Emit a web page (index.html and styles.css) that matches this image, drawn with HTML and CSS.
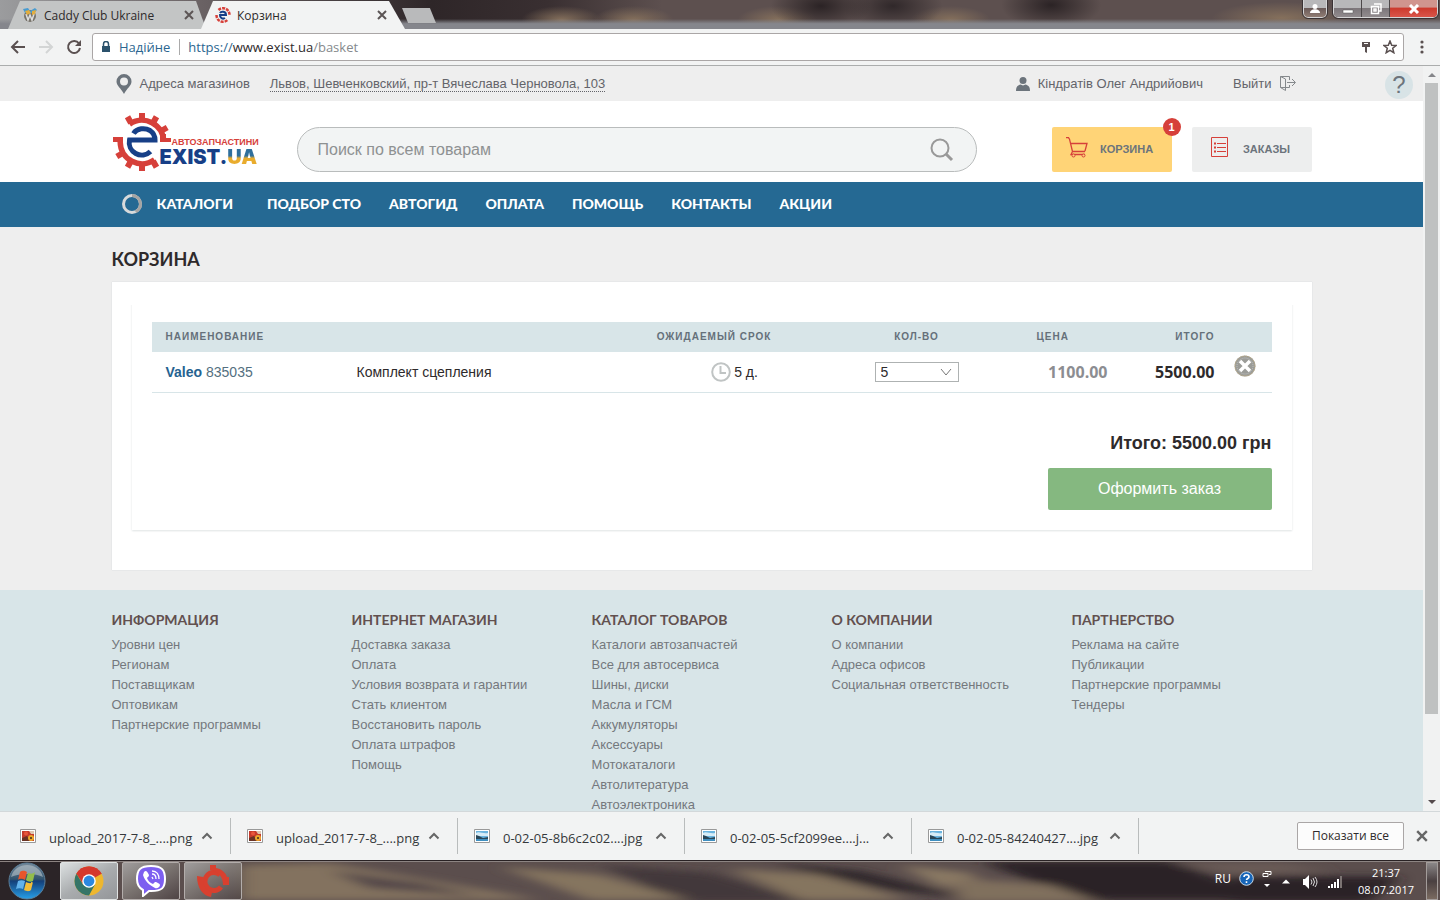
FILE: index.html
```html
<!DOCTYPE html>
<html lang="ru">
<head>
<meta charset="utf-8">
<title>Корзина</title>
<link rel="stylesheet" href="styles.css">
</head>
<body>
<svg class="defs" width="0" height="0" aria-hidden="true">
  <defs>
    <symbol id="x" viewBox="0 0 10 10"><path d="M1 1l8 8M9 1l-8 8" fill="none" stroke="currentColor" stroke-width="2"/></symbol>
    <symbol id="up" viewBox="0 0 12 8"><path d="M1.500 6.500L6 2l4.500 4.500" fill="none" stroke="currentColor" stroke-width="2"/></symbol>
    <symbol id="gear" viewBox="-30 -30 60 60">
      <g fill="none" stroke="#d6403a">
        <path d="M-12.500 -17.800A21.800 21.800 0 0 1 21.800 0M-21.800 0A21.800 21.800 0 0 0 12.500 17.800" stroke-width="5.500"/>
        <path d="M-11 -19L-14.500 -25.200M0 -22V-29M11 -19L14.500 -25.200M19 -11L25.200 -14.500M-19 11L-25.200 14.500M-11 19L-14.500 25.200M0 22V29M11 19L14.500 25.200" stroke-width="6"/>
      </g>
      <path d="M18 -8h6l0 4h5V0H18zM-29 -5h10V0h-10z" fill="#d6403a"/>
      <path d="M-8.500 -8.500C-5 -14 3 -14.500 8 -11.500C11 -9.500 13 -6 13 -2H-12.500A12.500 12.500 0 0 0 8.500 9.500" fill="none" stroke="#173f87" stroke-width="5"/>
    </symbol>
    <symbol id="pic-a" viewBox="0 0 16 14"><path d="M.5.500h15v13H.5z" fill="#fff" stroke="#999"/><path d="M2 2h12v10H2z" fill="#c63a2b"/><path d="M2 9l5-2 3 5H2z" fill="#6a3325"/><circle cx="11" cy="9" r="3" fill="#eba92d"/><circle cx="6" cy="4.500" r="2" fill="#e8573c"/><circle cx="11" cy="9" r="1" fill="#3b2a23"/><path d="M9 2h5v3h-3z" fill="#dfc7b2"/></symbol>
    <symbol id="pic-b" viewBox="0 0 16 14"><path d="M.5.500h15v13H.5z" fill="#fff" stroke="#999"/><path d="M2 2h12v10H2z" fill="#6bb4df"/><path d="M2 4c3-2 7 1 12 0v3H2z" fill="#d6ecf7"/><path d="M2 6l3 1 4 2 5-1v2H2z" fill="#2a4657"/><path d="M2 10h12v2H2z" fill="#3f8fc0"/></symbol>
    <linearGradient id="orb" x1="0" y1="0" x2="0" y2="1"><stop offset="0" stop-color="#75899a"/><stop offset=".45" stop-color="#31536e"/><stop offset=".5" stop-color="#143f79"/><stop offset="1" stop-color="#27a0e8"/></linearGradient>
    <filter id="soft" x="-20%" y="-50%" width="140%" height="200%"><feGaussianBlur stdDeviation="9 4"/></filter>
  </defs>
</svg>

<div class="desktop">
  <header class="titlebar">
    <div class="tabs" role="tablist">
      <div class="tab"><span class="tab-shape"></span>
        <svg class="tab-icon" viewBox="0 0 16 16"><circle cx="8" cy="9" r="6" fill="#77736b"/><path d="M4 7l2 6 2-5 2 5 2-6" fill="none" stroke="#dedede" stroke-width="1.500"/><path d="M1 2l5-1 2 3 5-3 2 2-3 3H3z" fill="#479bd1"/><path d="M3 4l4-1 2 3-4 2zM10 4l4-1-1 4-3 1z" fill="#e3ad3e"/></svg>
        <span class="tab-name">Caddy Club Ukraine</span>
        <button class="plain tab-close" aria-label="Закрити вкладку"><svg width="10" height="10"><use href="#x"/></svg></button>
      </div>
      <div class="tab active"><span class="tab-shape"></span>
        <svg class="tab-icon" viewBox="0 0 16 16"><path d="M3.500 3A6.500 6.500 0 0 1 14.500 8M1.500 8A6.500 6.500 0 0 0 12.500 13" fill="none" stroke="#d6403a" stroke-width="2.500" stroke-dasharray="3 1"/><path d="M5 6C6 4 11 4 11 8H5a3.200 3.200 0 0 0 5 3" fill="none" stroke="#173f87" stroke-width="2"/></svg>
        <span class="tab-name">Корзина</span>
        <button class="plain tab-close" aria-label="Закрити вкладку"><svg width="10" height="10"><use href="#x"/></svg></button>
      </div>
      <button class="plain new-tab" aria-label="Нова вкладка"></button>
    </div>
    <div class="window-controls">
      <button class="wc profile" aria-label="Користувач"><svg width="12" height="12" viewBox="0 0 12 12"><circle cx="6" cy="3.500" r="2.500" fill="#fff"/><path d="M1 10c0-5 10-5 10 0z" fill="#fff"/></svg></button>
      <div class="wc-group">
        <button class="wc" aria-label="Згорнути"><svg width="12" height="12" viewBox="0 0 12 12"><path d="M1 7h10v3H1z" fill="#fff" stroke="#555" stroke-width=".5"/></svg></button>
        <button class="wc" aria-label="Відновити"><svg width="12" height="12" viewBox="0 0 12 12"><path d="M4 1h7v7H9M1.500 3.500h7v7h-7zM4 6h2v2H4z" fill="none" stroke="#fff" stroke-width="1.500"/></svg></button>
        <button class="wc close" aria-label="Закрити"><svg width="12" height="10" viewBox="0 0 12 10"><path d="M2 1l8 8M10 1L2 9" stroke="#fff" stroke-width="3"/></svg></button>
      </div>
    </div>
  </header>

  <div class="toolbar">
    <button class="plain" aria-label="Назад"><svg width="16" height="16" viewBox="0 0 16 16"><path d="M15 8H2M8 2L2 8l6 6" fill="none" stroke="#5a5050" stroke-width="2"/></svg></button>
    <button class="plain" aria-label="Вперед"><svg width="16" height="16" viewBox="0 0 16 16"><path d="M1 8h13M8 2l6 6-6 6" fill="none" stroke="#d3d5d5" stroke-width="2"/></svg></button>
    <button class="plain" aria-label="Оновити"><svg width="16" height="16" viewBox="0 0 16 16"><path d="M13 4.500A6 6 0 1 0 14 9" fill="none" stroke="#5a5050" stroke-width="2"/><path d="M15 1v6H9z" fill="#5a5050"/></svg></button>
    <div class="address">
      <svg width="10" height="12" viewBox="0 0 10 12"><path d="M1 5h8v6H1z" fill="#2b526c"/><path d="M2.500 5V3a2.500 2.500 0 0 1 5 0v2" fill="none" stroke="#2b526c" stroke-width="1.500"/></svg>
      <span class="secure">Надійне</span>
      <span class="url"><span class="scheme">https://</span>www.exist.ua<span class="path">/basket</span></span>
      <svg width="10" height="13" viewBox="0 0 10 13"><path d="M1 1h8v5H6v6L4 11V6H1z" fill="#5a5050"/><path d="M3 2h4v1H3z" fill="#fff"/></svg>
      <svg width="14" height="14" viewBox="0 0 14 14"><path d="M7 1l1.700 4.200 4.300.3-3.300 2.800 1.100 4.400L7 10.300l-3.800 2.400 1.100-4.400L1 5.500l4.300-.3z" fill="none" stroke="#5a5050" stroke-width="1.500"/></svg>
    </div>
    <button class="plain menu" aria-label="Меню"><svg width="4" height="14" viewBox="0 0 4 14"><circle cx="2" cy="2" r="1.600" fill="#5a5050"/><circle cx="2" cy="7" r="1.600" fill="#5a5050"/><circle cx="2" cy="12" r="1.600" fill="#5a5050"/></svg></button>
  </div>

  <div class="viewport">
    <div class="page">
      <div class="topbar">
        <div class="wrap topbar-row">
          <svg width="16" height="20" viewBox="0 0 16 20"><path fill-rule="evenodd" d="M8 0a7.500 7.500 0 0 1 7.500 7.500C15.500 12 11 14 8 20 5 14 .5 12 .5 7.500A7.500 7.500 0 0 1 8 0zm0 3.500a4 4 0 1 0 0 8 4 4 0 0 0 0-8z" fill="#6c747c"/></svg>
          <span class="addr-label">Адреса магазинов</span>
          <a href="#" class="city">Львов, Шевченковский, пр-т Вячеслава Черновола, 103</a>
          <span class="user"><svg width="14" height="14" viewBox="0 0 14 14"><circle cx="7" cy="3.500" r="3.500" fill="#6c747c"/><path d="M0 14c0-5 2-5.500 4.500-6.500L7 8.500l2.500-1C12 8.500 14 9 14 14z" fill="#6c747c"/></svg>Кіндратів Олег Андрийович</span>
          <a href="#" class="logout">Выйти<svg width="16" height="15" viewBox="0 0 16 15"><path d="M9.500 4V.5h-9v11h5M.5.500l5 2.500v11.500l-5-3M5.500 11.500h4V9M7 6.500h8M12 3l3.500 3.500L12 10" fill="none" stroke="#85898c"/></svg></a>
        </div>
        <button class="help" aria-label="Помощь">?</button>
      </div>
      <div class="wrap head">
        <a href="#" class="logo" aria-label="Exist.ua">
          <svg width="60" height="60"><use href="#gear"/></svg>
          <span class="logo-text"><span class="logo-sub">АВТОЗАПЧАСТИНИ</span><span class="logo-name">EXIST.<b>UA</b></span></span>
        </a>
        <form class="search">
          <input type="text" placeholder="Поиск по всем товарам" aria-label="Поиск по всем товарам">
          <button class="plain" type="button" aria-label="Найти"><svg width="24" height="24" viewBox="0 0 24 24"><circle cx="10" cy="10" r="8.500" fill="none" stroke="#999" stroke-width="2"/><path d="M16 16l6 6" stroke="#999" stroke-width="3"/></svg></button>
        </form>
        <a href="#" class="tile cart"><svg width="22" height="21" viewBox="0 0 22 21"><path d="M0 .7h2.500l1 1.500L6.500 14.500H19M5 6.500h16l-2 7.500M6.500 14.500L5 17.500h14" fill="none" stroke="#d6403a" stroke-width="1.300"/><circle cx="7.500" cy="18.500" r="1.500" fill="#ffd477" stroke="#d6403a"/><circle cx="17.500" cy="18.500" r="1.500" fill="#ffd477" stroke="#d6403a"/></svg>КОРЗИНА<span class="badge">1</span></a>
        <a href="#" class="tile"><svg width="17" height="20" viewBox="0 0 17 20"><path d="M.5.500h16v19H.5zM6 6.500h9M6 10.500h9M6 14.500h9" fill="none" stroke="#d6403a"/><path d="M3 5.500h2v2H3zM3 9.500h2v2H3zM3 13.500h2v2H3z" fill="#d6403a"/></svg>ЗАКАЗЫ</a>
      </div>
      <nav class="nav">
        <div class="wrap nav-row">
          <a href="#" class="catalogs"><svg width="22" height="22" viewBox="0 0 22 22"><circle cx="11" cy="11" r="8.500" fill="none" stroke="#d8dadb" stroke-width="3"/><path d="M11 2.500a8.500 8.500 0 0 1 8.500 8.500 8.500 8.500 0 0 1-5 7.700" fill="none" stroke="#a5a4a3" stroke-width="3"/></svg>КАТАЛОГИ</a>
          <a href="#">ПОДБОР СТО</a><a href="#">АВТОГИД</a><a href="#">ОПЛАТА</a><a href="#">ПОМОЩЬ</a><a href="#">КОНТАКТЫ</a><a href="#">АКЦИИ</a>
        </div>
      </nav>
      <main class="wrap main">
        <h1>КОРЗИНА</h1>
        <section class="card">
          <div class="basket">
            <table>
              <colgroup><col class="c-name"><col><col class="c-term"><col class="c-qty"><col class="c-price"><col class="c-sum"><col class="c-del"></colgroup>
              <thead><tr><th class="left" colspan="2">НАИМЕНОВАНИЕ</th><th>ОЖИДАЕМЫЙ СРОК</th><th>КОЛ-ВО</th><th class="th-price">ЦЕНА</th><th class="right">ИТОГО</th><th></th></tr></thead>
              <tbody><tr>
                <td class="name"><a href="#"><b>Valeo</b> 835035</a></td>
                <td class="desc">Комплект сцепления</td>
                <td class="term"><span><svg width="20" height="20" viewBox="0 0 20 20"><circle cx="10" cy="10" r="8.800" fill="none" stroke="#c0c4c4" stroke-width="2"/><path d="M9.500 4v7H15" fill="none" stroke="#c0c4c4" stroke-width="2"/></svg>5 д.</span></td>
                <td class="qty"><span class="select"><select aria-label="Количество"><option>5</option></select><svg width="12" height="8" viewBox="0 0 12 8"><path d="M1 1l5 6 5-6" fill="none" stroke="#777"/></svg></span></td>
                <td class="money pale">1100.00</td>
                <td class="money">5500.00</td>
                <td class="del"><button class="plain" aria-label="Удалить"><svg width="22" height="22" viewBox="0 0 22 22"><circle cx="11" cy="11" r="10.500" fill="#9b9c98"/><circle cx="11" cy="11" r="10" fill="none" stroke="#c6b182" stroke-dasharray="1 1"/><circle cx="11" cy="11" r="8" fill="none" stroke="#c3c4c2" stroke-dasharray="1 1"/><path d="M6 6l10 10M16 6L6 16" stroke="#fff" stroke-width="3.500"/></svg></button></td>
              </tr></tbody>
            </table>
            <div class="total">Итого: 5500.00 грн</div>
            <button class="order">Оформить заказ</button>
          </div>
        </section>
      </main>
      <footer class="footer">
        <div class="wrap columns">
          <section><h2>ИНФОРМАЦИЯ</h2><a href="#">Уровни цен</a><a href="#">Регионам</a><a href="#">Поставщикам</a><a href="#">Оптовикам</a><a href="#">Партнерские программы</a></section>
          <section><h2>ИНТЕРНЕТ МАГАЗИН</h2><a href="#">Доставка заказа</a><a href="#">Оплата</a><a href="#">Условия возврата и гарантии</a><a href="#">Стать клиентом</a><a href="#">Восстановить пароль</a><a href="#">Оплата штрафов</a><a href="#">Помощь</a></section>
          <section><h2>КАТАЛОГ ТОВАРОВ</h2><a href="#">Каталоги автозапчастей</a><a href="#">Все для автосервиса</a><a href="#">Шины, диски</a><a href="#">Масла и ГСМ</a><a href="#">Аккумуляторы</a><a href="#">Аксессуары</a><a href="#">Мотокаталоги</a><a href="#">Автолитература</a><a href="#">Автоэлектроника</a></section>
          <section><h2>О КОМПАНИИ</h2><a href="#">О компании</a><a href="#">Адреса офисов</a><a href="#">Социальная ответственность</a></section>
          <section><h2>ПАРТНЕРСТВО</h2><a href="#">Реклама на сайте</a><a href="#">Публикации</a><a href="#">Партнерские программы</a><a href="#">Тендеры</a></section>
        </div>
      </footer>
    </div>
    <div class="scrollbar"><i class="arrow-up"></i><i class="thumb"></i><i class="rest"></i><i class="arrow-down"></i></div>
  </div>

  <div class="downloads">
    <div class="file"><svg width="16" height="14"><use href="#pic-a"/></svg><span>upload_2017-7-8_....png</span><button class="plain" aria-label="Дії"><svg width="12" height="8"><use href="#up"/></svg></button></div>
    <div class="file"><svg width="16" height="14"><use href="#pic-a"/></svg><span>upload_2017-7-8_....png</span><button class="plain" aria-label="Дії"><svg width="12" height="8"><use href="#up"/></svg></button></div>
    <div class="file"><svg width="16" height="14"><use href="#pic-b"/></svg><span>0-02-05-8b6c2c02....jpg</span><button class="plain" aria-label="Дії"><svg width="12" height="8"><use href="#up"/></svg></button></div>
    <div class="file"><svg width="16" height="14"><use href="#pic-b"/></svg><span>0-02-05-5cf2099ee....j...</span><button class="plain" aria-label="Дії"><svg width="12" height="8"><use href="#up"/></svg></button></div>
    <div class="file"><svg width="16" height="14"><use href="#pic-b"/></svg><span>0-02-05-84240427....jpg</span><button class="plain" aria-label="Дії"><svg width="12" height="8"><use href="#up"/></svg></button></div>
    <button class="show-all">Показати все</button>
    <button class="plain dl-close" aria-label="Закрити"><svg width="12" height="12"><use href="#x"/></svg></button>
  </div>

  <div class="taskbar">
    <svg class="wallpaper" viewBox="0 0 1440 40" preserveAspectRatio="none" aria-hidden="true">
      <path d="M0 0h1440v40H0z" fill="#5b4e4d"/>
      <g filter="url(#soft)">
        <path d="M240 4l90-2 170 30 40 8H240z" fill="#83725f"/>
        <path d="M330 10l90 12 60 14-110-8z" fill="#53474a"/>
        <path d="M600 4l110 8 100 30H660l-20-20z" fill="#42383b"/>
        <path d="M500 6l100 8 90 26H590z" fill="#85745f"/>
        <path d="M730 8l90 6 90 26H800z" fill="#85745f"/>
        <path d="M770 2l90 8 110 28-80-8z" fill="#2e2629"/>
        <path d="M900 4l70 8 20 18-50-4z" fill="#8a7964"/>
        <path d="M980 0h190l110 40H1080z" fill="#2c2428"/>
        <path d="M950 18l100 6 50 18H960z" fill="#806f5d"/>
        <path d="M1170 2l110 0 50 8-90 4z" fill="#6b5c57"/>
        <path d="M1230 16h170l-30 26h-140z" fill="#2c2428"/>
      </g>
      <path d="M0 0h62v40H0z" fill="#2b2427"/>
      <path d="M0 .5h1440" stroke="#8e8684"/>
    </svg>
    <button class="plain start" aria-label="Пуск"><svg width="38" height="38" viewBox="0 0 38 38"><circle cx="19" cy="19" r="18" fill="url(#orb)" stroke="#5b7f99"/><path d="M3 15C7-1 31-1 35 15c-7-4-24-4-32 0z" fill="#b9c4cb" opacity=".6"/><path d="M12 10c3-2 5-1 7 0l-2 8c-2-1-5-2-7 0z" fill="#e8562b"/><path d="M20 11c3 1 5 1 7-1l-2 9c-2 1-5 1-7-1z" fill="#93bd4b"/><path d="M10 19c2-1 5-1 7 0l-2 8c-2-1-5-1-7 0z" fill="#62b2ec"/><path d="M18 20c2 1 5 2 7 0l-2 8c-2 2-5 1-7 0z" fill="#f3bd38"/></svg></button>
    <button class="task light" aria-label="Chrome"><svg width="30" height="30" viewBox="-15 -15 30 30"><circle r="14.500" fill="#eeb72e"/><path d="M0 0L-12.600-7.200A14.500 14.500 0 0 1 12.600-7.200z" fill="#d4382d"/><path d="M0 -7h12.700A14.500 14.500 0 0 0-12.600-7.200L-6 3z" fill="#d4382d"/><path d="M-12.600-7.200A14.500 14.500 0 0 0 0 14.500L6 3.500-6 3.500z" fill="#357567"/><circle r="6.800" fill="#fff"/><circle r="5.400" fill="#2b88e0"/></svg></button>
    <button class="task" aria-label="Viber"><svg width="30" height="32" viewBox="0 0 30 32"><path d="M15 1C4 1 1 5 1 14c0 6 2 9 6 11v6l6-5h2c11 0 14-3 14-12S26 1 15 1z" fill="#7d5ff0" stroke="#fff" stroke-width="2"/><path d="M8 7c2-2 3-1 5 3 0 2-2 2-2 3 1 3 3 5 6 6l2-2c2 0 5 2 5 3 0 2-3 4-5 3C13 20 9 16 7 10z" fill="#fff"/><path d="M16 6c5 0 7 4 7 8M16 9c3 0 4 2 4 5M16 12l1 2" fill="none" stroke="#fff" stroke-width="1.300"/></svg></button>
    <button class="task" aria-label="Програма"><svg width="34" height="34" viewBox="-17 -17 34 34"><path d="M7-6A9 9 0 1 0 8 6" fill="none" stroke="#d8402f" stroke-width="5"/><path d="M-3-16h6v3A14 14 0 0 1 14-4h2v8h-6C10-3 7-9-3-11zM-16-5l6 1C-11 4-7 9-1 11l-1 5C-10 15-16 7-16-5z" fill="#d8402f"/></svg></button>
    <div class="tray">
      <span class="lang">RU</span>
      <svg width="15" height="15" viewBox="0 0 15 15"><circle cx="7.500" cy="7.500" r="6.800" fill="#1665b8" stroke="#cadbe8"/><path d="M5 6c0-3 5-3 5 0 0 1.500-2.500 1.500-2.500 3M7.500 10.300v1.600" fill="none" stroke="#fff" stroke-width="1.600"/></svg>
      <svg width="10" height="18" viewBox="0 0 10 18"><path d="M3 1.500h6v3H7M1 3.500h5v3H1z" fill="none" stroke="#fff"/><path d="M2 14h6l-3 3z" fill="#fff"/></svg>
      <svg class="tray-up" width="8" height="5" viewBox="0 0 8 5"><path d="M0 4.500h8L4 .5z" fill="#fff"/></svg>
      <svg class="tray-low" width="16" height="14" viewBox="0 0 16 14"><path d="M1 4h2l4-4v14l-4-4H1z" fill="#fff"/><path d="M9 4.500q2 2.500 0 5M11 3q3 4 0 8M13 2q4 5 0 10" fill="none" stroke="#ddd"/></svg>
      <svg class="tray-low" width="14" height="12" viewBox="0 0 14 12"><path d="M0 10h2v2H0zM3 8h2v4H3zM6 6h2v6H6zM9 3h2v9H9z" fill="#fff"/><path d="M12 0h2v12h-2z" fill="#7c7473"/></svg>
      <div class="clock"><span>21:37</span><span>08.07.2017</span></div>
    </div>
    <button class="desk" aria-label="Показати робочий стіл"></button>
  </div>
</div>
</body>
</html>
```

FILE: styles.css
```css
* { box-sizing: border-box; }
body { margin: 0; font-family: "Liberation Sans", Arial, sans-serif; font-size: 13px; color: #2e2a2b; }
a { color: inherit; text-decoration: none; }
svg { display: block; flex: none; }
button { font: inherit; color: inherit; }
.defs { position: absolute; }
.plain { border: 0; padding: 0; background: none; }
.desktop { display: flex; flex-direction: column; height: 100vh; overflow: hidden; }

/* Title bar */
.titlebar {
  display: flex; justify-content: space-between; align-items: flex-start; flex: none;
  height: 29px; padding-left: 8px;
  font: 12px "Open Sans", "Noto Sans", sans-serif;
  background:
    linear-gradient(transparent 65%, #85868c 82%),
    radial-gradient(ellipse 50px 24px at 73% 5px, #2b2325, transparent),
    radial-gradient(ellipse 50px 24px at 57% 6px, #2b2325, transparent),
    radial-gradient(ellipse 50px 24px at 62% 6px, #30282a, transparent),
    radial-gradient(ellipse 40px 14px at 39% 20px, #85705c, transparent),
    radial-gradient(ellipse 40px 14px at 44% 20px, #85705c, transparent),
    radial-gradient(ellipse 40px 14px at 54% 20px, #85705c, transparent),
    radial-gradient(ellipse 40px 14px at 66% 20px, #85705c, transparent),
    radial-gradient(ellipse 70px 16px at 89% 18px, #85705c, transparent),
    linear-gradient(90deg, #9b9c9e 0, #6a6264 14%, #2e2628 30%, #392f31 38%, #5d504f 46%, #5d504f 100%);
}
.tabs { display: flex; }
.tab { position: relative; display: flex; align-items: center; width: 198px; height: 28px; margin: 1px -5px 0 0; padding: 0 12px 0 14px; }
.tab-shape { position: absolute; inset: 0; background: #c3c5c5; clip-path: polygon(0 100%, 12px 0, 188px 0, 100% 100%); }
.tab.active { z-index: 1; width: 204px; padding: 0 18px 0 14px; }
.tab.active .tab-shape { background: #f2f3f3; }
.tab-icon { position: relative; width: 16px; height: 16px; margin-right: 6px; }
.tab-name { position: relative; flex: 1; white-space: nowrap; }
.tab-close { position: relative; color: #5c5555; }
.new-tab { width: 34px; height: 15px; margin: 8px 0 0 2px; background: #b9babb; clip-path: polygon(0 0, 82% 0, 100% 100%, 18% 100%); }
.window-controls { display: flex; gap: 6px; padding-right: 2px; }
.wc { display: flex; align-items: center; justify-content: center; width: 28px; height: 17px; padding: 0; border: 0; border-right: 1px solid #4c484a; background: linear-gradient(#b8b8ba 45%, #7d777b 50%, #918b8e); }
.wc.profile, .wc-group { height: 18px; border: 1px solid #d5d5d6; border-top: 0; border-radius: 0 0 5px 5px; outline: 1px solid #3a3335; overflow: hidden; }
.wc.profile { width: 24px; background: linear-gradient(#b8b8ba 45%, #6b5b59 50%, #917d74); }
.wc-group { display: flex; }
.wc.close { width: 47px; border: 0; background: linear-gradient(#d0958e 40%, #cd3b2e 50%, #d9554a); }

/* Browser toolbar */
.toolbar { display: flex; align-items: center; gap: 12px; flex: none; height: 37px; padding: 0 16px 0 10px; border-bottom: 1px solid #abadad; background: #f2f3f3; }
.address { display: flex; align-items: center; flex: 1; gap: 8px; height: 28px; margin-left: -2px; padding: 0 6px 0 8px; border: 1px solid #aaa6a6; border-radius: 3px; background: #fff; font: 13px/20px "Open Sans", "Noto Sans", sans-serif; }
.address > svg:last-child { margin-left: 4px; }
.menu { margin-left: 4px; }
.secure { color: #2b6690; padding-right: 9px; border-right: 1px solid #aaa; line-height: 16px; }
.url { flex: 1; }
.scheme { color: #2b6690; }
.path { color: #85898c; }

/* Viewport */
.viewport { display: flex; flex: 1; min-height: 0; }
.page { flex: 1; min-width: 0; overflow: hidden; background: #eee; }
.wrap { max-width: 1200px; margin: 0 auto; }
.scrollbar { display: flex; flex-direction: column; align-items: center; width: 17px; padding: 7px 0; background: #f1f2f2; }
.arrow-up { border: 4px solid transparent; border-top: 0; border-bottom: 4px solid #85868a; }
.arrow-down { border: 4px solid transparent; border-bottom: 0; border-top: 4px solid #554b4d; }
.thumb { flex: 630; width: 13px; margin-top: 6px; background: #bfc1c1; }
.rest { flex: 86; }

.topbar { position: relative; height: 35px; color: #63646a; }
.topbar-row { display: flex; align-items: center; height: 35px; padding: 0 16px 0 4px; }
.addr-label { margin: 0 20px 0 8px; }
.city { border-bottom: 1px dotted #63646a; }
.user { display: flex; align-items: center; gap: 8px; margin: 0 30px 0 auto; }
.logout { display: flex; align-items: center; gap: 8px; }
.help { position: absolute; right: 10px; top: 5px; width: 28px; height: 28px; padding: 0; border: 0; border-radius: 50%; background: #d8e3e6; color: #6c747c; font-size: 24px; line-height: 28px; }
.head { display: flex; align-items: center; height: 81px; background: #fff; box-shadow: -400px 0 #fff, 400px 0 #fff; }
.logo { display: flex; width: 185px; }
.logo-text { display: flex; flex-direction: column; margin: 25px 0 0 -12px; }
.logo-sub { padding-left: 12px; font: bold 9px/11px "Liberation Sans", sans-serif; color: #d6403a; }
.logo-name { font: 900 20px/24px Inter, sans-serif; color: #173f87; margin-top: -3px; }
.logo-name b { font-weight: 900; color: transparent; background: linear-gradient(#2f6f9c 45%, #e9ac2d 55%); background-clip: text; -webkit-background-clip: text; }
.search { display: flex; align-items: center; flex: 1; height: 45px; margin: 16px 75px 0 0; padding: 0 22px 0 20px; border: 1px solid #b9bcbc; border-radius: 23px; background: #f2f4f4; }
.search input { flex: 1; border: 0; padding: 0; background: none; font: 16px "Liberation Sans", sans-serif; outline: 0; }
.search input::placeholder { color: #8e9192; opacity: 1; }
.tile { position: relative; display: flex; align-items: center; justify-content: center; width: 120px; height: 45px; margin-top: 16px; padding: 0 2px 2px 0; gap: 15px; border-radius: 2px; background: #edeeee; font-size: 11px; font-weight: bold; color: #6c747c; }
.tile svg { margin-bottom: 3px; }
.cart { margin-right: 20px; gap: 12px; padding-right: 4px; background: #ffd477; }
.badge { position: absolute; right: -9px; top: -9px; width: 18px; height: 18px; border-radius: 50%; background: #d6403a; color: #fff; line-height: 18px; text-align: center; }

.nav { padding-bottom: 2px; background: #256993; color: #fff; }
.nav-row { display: flex; align-items: center; gap: 28px; height: 43px; padding-left: 9px; font: 900 14px Lato, Inter, sans-serif; }
.catalogs { display: flex; align-items: center; gap: 14px; margin-right: 6px; }

.main h1 { margin: 0; padding: 22px 0 12px; font: bold 18px/21px Lato, Inter, sans-serif; }
.card { padding: 20px 20px 40px; background: #fff; box-shadow: 0 0 1px #c5cbcc; }
.basket { padding: 20px; box-shadow: 0 1px 2px #dfe3e4; clip-path: inset(3px -3px -3px -3px); }
table { width: 100%; table-layout: fixed; border-collapse: collapse; }
.c-name { width: 190px; }
.c-term { width: 205px; }
.c-qty { width: 200px; }
.c-price { width: 91px; }
.c-sum { width: 107px; }
.c-del { width: 57px; }
th, td { padding: 0; }
th { height: 30px; padding-bottom: 2px; background: #d8e5e8; color: #65707a; font-size: 10px; letter-spacing: 1px; }
.left { padding-left: 14px; text-align: left; }
.right { text-align: right; }
.th-price { padding-left: 20px; text-align: left; }
td { height: 40px; border-bottom: 1px solid #d8e5e8; font-size: 14px; }
.name { padding-left: 14px; color: #536f80; }
.name b { color: #256290; }
.desc { padding-left: 15px; }
.term { padding-left: 41px; }
.term span { display: flex; align-items: center; justify-content: center; gap: 3px; }
.qty { text-align: center; }
.select { position: relative; display: inline-block; width: 84px; vertical-align: middle; }
.select select { display: block; width: 100%; height: 20px; padding: 0 5px; appearance: none; border: 1px solid #aeb2b2; border-radius: 0; background: #fff; color: inherit; font: 14px "Liberation Sans", sans-serif; }
.select svg { position: absolute; right: 7px; top: 6px; pointer-events: none; }
.money { text-align: right; font: bold 16px "Open Sans", sans-serif; }
.pale { color: #8c8d91; }
.del { padding: 0 0 8px 19px; }
.total { padding: 39px 0 14px; text-align: right; font-weight: bold; font-size: 18px; line-height: 22px; }
.order { display: block; width: 224px; height: 42px; margin-left: auto; border: 0; border-radius: 2px; background: #85b880; color: #fff; font-size: 16px; }

.footer { margin-top: 20px; min-height: 400px; background: #d8e5e8; color: #74787d; }
.columns { display: grid; grid-template-columns: repeat(5, 1fr); padding-top: 20px; }
.columns a { display: block; line-height: 20px; }
.columns h2 { margin: 0 0 5px; font: bold 14px/20px Lato, Inter, sans-serif; color: #62504f; }

/* Downloads shelf */
.downloads { display: flex; align-items: center; flex: none; height: 49px; padding-right: 12px; border-top: 1px solid #d3d8da; background: #f2f3f3; font: 13px "Open Sans", "Noto Sans", sans-serif; }
.file { display: flex; align-items: center; width: 227px; height: 36px; padding: 0 17px 0 16px; border-right: 1px solid #b9bcbc; color: #35383b; }
.file:first-child { width: 231px; padding-left: 20px; }
.file span { flex: 1; margin-left: 13px; padding-top: 4px; white-space: nowrap; }
.file button, .dl-close { color: #666; }
.show-all { width: 107px; height: 28px; margin: 0 12px 0 auto; padding: 0 0 2px; border: 1px solid #aaa6a6; border-radius: 2px; background: #fcfcfc; font-size: 12px; }

/* Taskbar */
.taskbar { position: relative; display: flex; align-items: center; gap: 4px; flex: none; height: 40px; padding-left: 8px; border-top: 1px solid #292224; color: #fff; font: 12px "Open Sans", "Noto Sans", sans-serif; }
.wallpaper { position: absolute; inset: 0; width: 100%; height: 100%; }
.taskbar > :not(.wallpaper) { position: relative; }
.start { margin-right: 10px; }
.task { display: flex; align-items: center; justify-content: center; width: 58px; height: 38px; padding: 0; border: 1px solid #b3adab; border-radius: 2px; background: linear-gradient(150deg, #b1b1b1cc, #8d8985aa 45%, #463d3f99); }
.task.light { border-color: #e0e3e3; background: linear-gradient(150deg, #dce0e1, #a9acae 50%, #949699); }
.tray { display: flex; align-items: center; height: 100%; margin-left: auto; gap: 8px; }
.lang { margin-bottom: 4px; }
.tray > svg { margin-bottom: 4px; }
.tray > .tray-up { margin: 2px 4px 0 2px; }
.tray > .tray-low { margin: 2px 2px 0 0; }
.clock { display: flex; flex-direction: column; margin: 0 8px 0 6px; line-height: 17px; text-align: center; font-size: 11px; }
.desk { width: 12px; height: 38px; margin-right: 2px; padding: 0; border: 1px solid #a39c9a; background: linear-gradient(#8b8788, #4a4041 50%, #7a6a60); }
```
